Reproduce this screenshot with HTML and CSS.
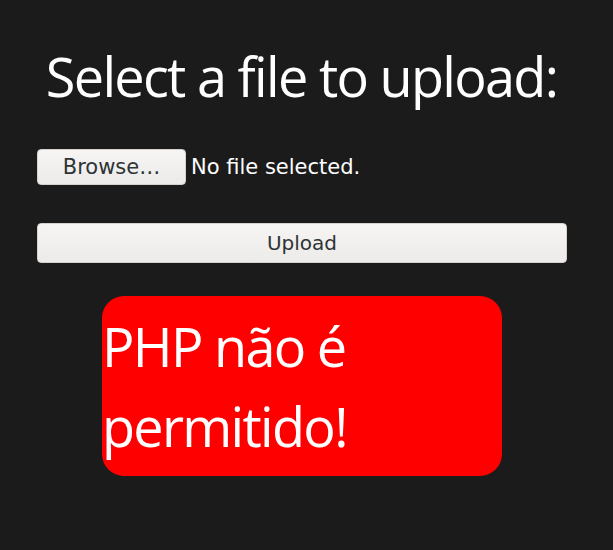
FILE: index.html
```html
<!DOCTYPE html>
<html lang="pt">
<head>
    <meta charset="UTF-8">
    <meta name="viewport" content="width=device-width, initial-scale=1.0">
    <title>Upload</title>
    <link rel="stylesheet" href="styles.css">
</head>
<body>
    <div class="container">
        <h1>Select a file to upload:</h1>
        <form class="upload-form">
            <div class="file-row">
                <button type="button" class="btn browse">Browse…</button>
                <span class="file-name">No file selected.</span>
            </div>
            <button type="button" class="btn upload">Upload</button>
        </form>
        <div class="error">PHP não é permitido!</div>
    </div>
</body>
</html>
```

FILE: styles.css
```css
body {
    margin: 0;
    background: #1c1b1c;
    color: #fff;
    font-family: "DejaVu Sans", sans-serif;
}

.container {
    width: 529px;
    padding: 40px 0 0 37px;
}

h1 {
    margin: 0;
    font-family: "Open Sans", sans-serif;
    font-weight: 400;
    font-size: 54px;
    line-height: 72px;
    letter-spacing: -1.7px;
    text-align: center;
    white-space: nowrap;
}

.upload-form {
    margin-top: 37px;
}

.file-row {
    display: flex;
    align-items: center;
    gap: 5px;
}

.btn {
    font-family: "DejaVu Sans", sans-serif;
    font-size: 20px;
    color: #2e3436;
    background: linear-gradient(#f6f5f4, #edebe9);
    border: 1px solid #d6d1cd;
    border-radius: 4px;
    padding: 0;
}

.browse {
    width: 149px;
    height: 36px;
    font-size: 21px;
}

.file-name {
    font-size: 21px;
}

.upload {
    display: block;
    width: 530px;
    height: 40px;
    margin-top: 38px;
}

.error {
    width: 400px;
    height: 180px;
    box-sizing: border-box;
    margin: 33px 0 0 65px;
    padding: 10px 0;
    background: #f00;
    border-radius: 22px;
    font-family: "Open Sans", sans-serif;
    font-size: 54px;
    line-height: 80px;
    letter-spacing: -1.7px;
}
```
